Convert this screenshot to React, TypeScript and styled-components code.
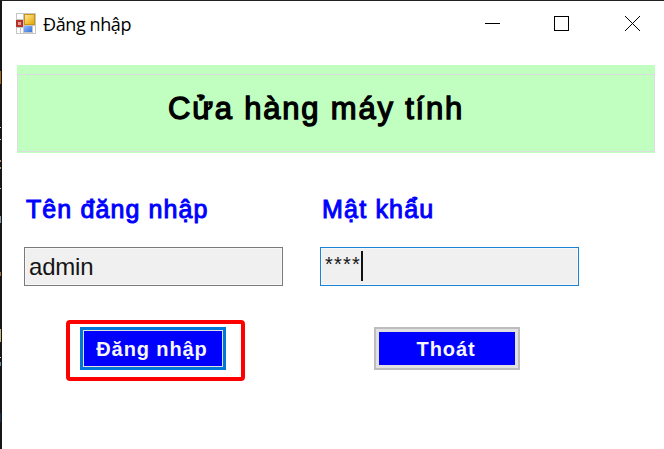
import React from "react";
import styled, { createGlobalStyle } from "styled-components";

const GlobalStyle = createGlobalStyle`
  * { box-sizing: border-box; }
  html, body { margin: 0; overflow: hidden; }
`;

const Desktop = styled.div`
  display: grid;
  grid-template-columns: 2px 1fr;
  width: 664px;
  height: 449px;
  padding-top: 1px;
  background: #202024;
  font-family: "Liberation Sans", Arial, sans-serif;
`;

const EditorEdge = styled.div`
  display: flex;
  flex-direction: column;
  background: #17171a;
`;

const EdgeMark = styled.i<{ $gap: number; $size: number; $color: string }>`
  flex: none;
  width: 1px;
  height: ${(p) => p.$size}px;
  margin-top: ${(p) => p.$gap}px;
  background: ${(p) => p.$color};
`;

const Window = styled.main`
  background: #fff;
  display: flex;
  flex-direction: column;
`;

const TitleBar = styled.header`
  display: flex;
  align-items: flex-start;
  height: 64px;
  padding-left: 13px;
`;

const AppIcon = styled.svg`
  flex: none;
  margin-top: 11px;
`;

const WindowTitle = styled.span`
  flex: 1;
  margin: 10px 0 0 6px;
  font: 18px/26px "Open Sans", sans-serif;
  letter-spacing: -0.4px;
  color: #000;
  white-space: nowrap;
`;

const CaptionButtons = styled.div`
  display: flex;
  padding: 15px 23px 0 0;
  gap: 54px;
`;

const Banner = styled.section`
  height: 88px;
  margin: 0 9px 0 15px;
  padding: 9px 0 0;
  background: #c0ffc0;
`;

const BannerGroup = styled.div`
  height: 78px;
  border: 1px solid #dcdcdc;
  padding: 16px 0 0 150px;
`;

const Heading = styled.h1`
  margin: 0;
  font-size: 31px;
  line-height: 36px;
  font-weight: 400;
  letter-spacing: 1.8px;
  -webkit-text-stroke: 1.3px #000;
  white-space: nowrap;
`;

const Fields = styled.section`
  display: grid;
  grid-template-columns: 259px 259px;
  column-gap: 37px;
  margin: 41px 0 0 22px;
`;

const Field = styled.label`
  display: flex;
  flex-direction: column;
`;

const FieldName = styled.span<{ $spacing: number }>`
  height: 53px;
  padding: 1px 0 0 2px;
  font-size: 25px;
  line-height: 29px;
  letter-spacing: ${(p) => p.$spacing}px;
  color: #0000ff;
  -webkit-text-stroke: 1px #0000ff;
  white-space: nowrap;
`;

const TextBox = styled.div<{ $focused?: boolean }>`
  display: flex;
  height: 39px;
  padding: 2px 4px;
  border: 1px solid ${(p) => (p.$focused ? "#1883d7" : "#7a7a7a")};
  box-shadow: inset 0 0 0 1px #f7f7f7;
  background: #f0f0f0;
  color: #151515;
  font-size: ${(p) => (p.$focused ? 20 : 24)}px;
  line-height: ${(p) => (p.$focused ? 28 : 33)}px;
  letter-spacing: ${(p) => (p.$focused ? 1.2 : -0.2)}px;
`;

const Caret = styled.i`
  width: 2px;
  height: 30px;
  margin-top: 1px;
  background: #111;
`;

const Actions = styled.section`
  display: flex;
  align-items: flex-start;
  margin: 34px 0 0 64px;
  gap: 129px;
`;

const Highlight = styled.div`
  width: 179px;
  height: 61px;
  padding: 3px 10px;
  border: 4px solid #fe0000;
  border-radius: 4px;
`;

const Button = styled.button<{ $primary?: boolean }>`
  display: block;
  width: 146px;
  height: 43px;
  margin: ${(p) => (p.$primary ? "0" : "7px 0 0")};
  padding: 0 3px 0 0;
  border: ${(p) => (p.$primary ? "3px solid #0078d7" : "2px solid #bdbdbd")};
  box-shadow: inset 0 0 0 ${(p) => (p.$primary ? "1px #e1e1e1" : "3px #e1e1e1")};
  background: #0000ff;
  color: #f6f6ff;
  font: 700 20px/24px "Liberation Sans", Arial, sans-serif;
  letter-spacing: 0.9px;
  text-indent: 1px;
  white-space: nowrap;
`;

function FormIcon() {
  return (
    <AppIcon width="22" height="23" viewBox="0 0 22 23" aria-hidden="true">
      <defs>
        <linearGradient id="gold" x1="0" y1="0" x2="1" y2="1">
          <stop offset="0" stopColor="#ffe698" />
          <stop offset="1" stopColor="#e5a800" />
        </linearGradient>
        <linearGradient id="azure" x1="0" y1="0" x2="1" y2="1">
          <stop offset="0" stopColor="#91b9fa" />
          <stop offset="1" stopColor="#3773dc" />
        </linearGradient>
      </defs>
      <path fill="#c6c6c6" d="M1 1h20v21H1z" />
      <path fill="#fff" d="M2 2h6v5H2zM2 16h3v5H2zM6 16h2v5H6zM18 14h2v7h-2z" />
      <path fill="#b73127" d="M1 8h7v7H1z" />
      <path fill="#e2a29b" d="M3 10h3v3H3z" />
      <path fill="#c99510" d="M9 2h11v11H9z" />
      <path fill="url(#gold)" d="M10 3h9v9h-9z" />
      <path fill="url(#azure)" d="M9 14h8v6H9z" />
    </AppIcon>
  );
}

const marks = [
  { gap: 70, size: 13, color: "#a56414" },
  { gap: 43, size: 1, color: "#d5d5d5" },
  { gap: 11, size: 1, color: "#d5d5d5" },
  { gap: 20, size: 2, color: "#b28468" },
  { gap: 5, size: 2, color: "#a99b70" },
  { gap: 19, size: 1, color: "#bfc5cc" },
  { gap: 27, size: 7, color: "#8294a6" },
  { gap: 49, size: 4, color: "#a56b38" },
  { gap: 53, size: 13, color: "#c5b77b" },
  { gap: 15, size: 1, color: "#d5d5d5" },
  { gap: 4, size: 4, color: "#72889e" },
  { gap: 47, size: 9, color: "#18334e" },
];

export default function App() {
  return (
    <>
      <GlobalStyle />
      <Desktop>
        <EditorEdge>
          {marks.map((m, i) => (
            <EdgeMark key={i} $gap={m.gap} $size={m.size} $color={m.color} />
          ))}
        </EditorEdge>
        <Window>
          <TitleBar>
            <FormIcon />
            <WindowTitle>Đăng nhập</WindowTitle>
            <CaptionButtons>
              <svg width="15" height="15" shapeRendering="crispEdges">
                <path d="M0 7.5h15" stroke="#000" />
              </svg>
              <svg width="15" height="15" shapeRendering="crispEdges">
                <path d="M.5.5h14v14H.5z" fill="none" stroke="#000" />
              </svg>
              <svg width="18" height="15">
                <path d="M2 0l15 15M17 0L2 15" stroke="#000" />
              </svg>
            </CaptionButtons>
          </TitleBar>
          <Banner>
            <BannerGroup>
              <Heading>Cửa hàng máy tính</Heading>
            </BannerGroup>
          </Banner>
          <Fields>
            <Field>
              <FieldName $spacing={1.1}>Tên đăng nhập</FieldName>
              <TextBox>admin</TextBox>
            </Field>
            <Field>
              <FieldName $spacing={1.2}>Mật khẩu</FieldName>
              <TextBox $focused>
                ****
                <Caret />
              </TextBox>
            </Field>
          </Fields>
          <Actions>
            <Highlight>
              <Button $primary>Đăng nhập</Button>
            </Highlight>
            <Button>Thoát</Button>
          </Actions>
        </Window>
      </Desktop>
    </>
  );
}
